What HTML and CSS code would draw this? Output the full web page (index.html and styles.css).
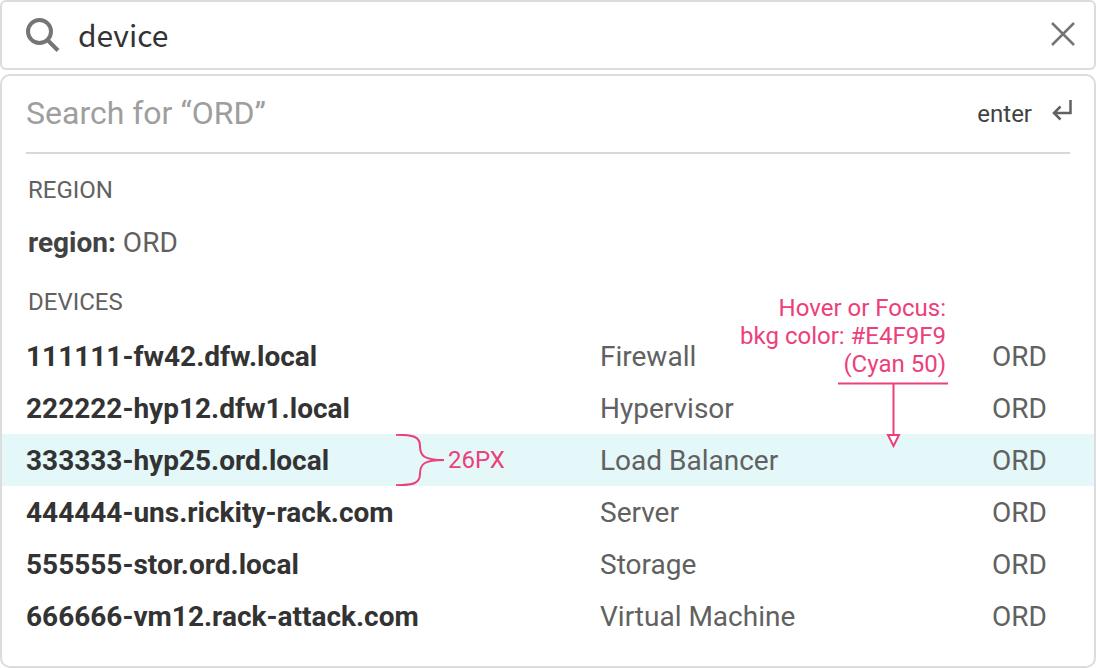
FILE: index.html
```html
<!DOCTYPE html>
<html lang="en">
<head>
<meta charset="utf-8">
<meta name="viewport" content="width=device-width, initial-scale=1">
<title>Search</title>
<link rel="stylesheet" href="styles.css">
</head>
<body>
<main class="search">
  <form class="search-bar" role="search">
    <label class="search-label" for="query" aria-label="Search">
      <svg class="icon-search" width="34" height="34" viewBox="0 0 34 34" aria-hidden="true"><circle cx="13.5" cy="13.5" r="11.5"/><path d="M21.5 22 32 32.500"/></svg>
    </label>
    <input class="search-input" id="query" type="text" value="device" autocomplete="off">
    <button class="icon-button" type="reset" aria-label="Clear search">
      <svg class="icon-close" width="24" height="24" viewBox="0 0 24 24" aria-hidden="true"><path d="M1 1 23 23M23 1 1 23"/></svg>
    </button>
  </form>

  <section class="results" aria-label="Suggestions">
    <button class="submit-row" type="button">
      <span class="submit-text">Search for “ORD”</span>
      <span class="submit-key">enter
        <svg class="icon-enter" width="20" height="22" viewBox="0 0 20 22" aria-hidden="true"><path d="M18.500 1V14H2M8.500 7.500 2 14l6.500 6.500"/></svg>
      </span>
    </button>

    <h2 class="group-title">Region</h2>
    <a class="region-link" href="#region"><strong>region:</strong> ORD</a>

    <h2 class="group-title">Devices</h2>
    <table class="devices">
      <colgroup><col><col class="col-type"><col class="col-region"></colgroup>
      <tbody>
        <tr><th scope="row"><a href="#d1">111111-fw42.dfw.local</a></th><td>Firewall</td><td>ORD</td></tr>
        <tr><th scope="row"><a href="#d2">222222-hyp12.dfw1.local</a></th><td>Hypervisor</td><td>ORD</td></tr>
        <tr class="is-active">
          <th scope="row"><a href="#d3">333333-hyp25.ord.local</a>
            <span class="note note-height">
              <svg width="48" height="52" viewBox="0 0 48 52" aria-hidden="true"><path d="M0 .75C18 .75 24 3 24 12C24 22 28 26 48 26C28 26 24 30 24 40C24 49 18 51.250 0 51.250"/></svg>
              26PX
            </span>
          </th>
          <td>Load Balancer
            <span class="note note-color">
              <span class="note-text">Hover or Focus:<br>bkg color: #E4F9F9<br>(Cyan 50)</span>
              <svg width="110" height="66" viewBox="0 0 110 66" aria-hidden="true"><path d="M0 1.500H110M55.500 1.500V53"/><path class="arrow-head" d="M50 53H61L55.500 64Z"/></svg>
            </span>
          </td>
          <td>ORD</td>
        </tr>
        <tr><th scope="row"><a href="#d4">444444-uns.rickity-rack.com</a></th><td>Server</td><td>ORD</td></tr>
        <tr><th scope="row"><a href="#d5">555555-stor.ord.local</a></th><td>Storage</td><td>ORD</td></tr>
        <tr><th scope="row"><a href="#d6">666666-vm12.rack-attack.com</a></th><td>Virtual Machine</td><td>ORD</td></tr>
      </tbody>
    </table>
  </section>
</main>
</body>
</html>
```
FILE: styles.css
```css
* {
  box-sizing: border-box;
}

body {
  margin: 0;
  background: #fff;
  color: #616161;
  font-family: Roboto, "Liberation Sans", sans-serif;
  font-size: 28px;
  line-height: 32px;
}

button,
input {
  margin: 0;
  padding: 0;
  border: 0;
  background: none;
  font: inherit;
}

button {
  cursor: pointer;
}

svg {
  display: block;
  fill: none;
}

a {
  color: inherit;
  text-decoration: none;
}

.search {
  display: flex;
  flex-direction: column;
  gap: 4px;
}

.search-bar {
  display: flex;
  align-items: center;
  gap: 18px;
  padding: 8px 18px 10px 24px;
  border: 2px solid #dcdcdc;
  border-radius: 6px;
}

.icon-search {
  margin-top: 2px;
  stroke: #757575;
  stroke-width: 4;
}

.search-input {
  flex: 1;
  min-width: 0;
  height: 48px;
  color: #333;
  font-family: "Noto Sans CJK SC", "Noto Sans", sans-serif;
  font-size: 30px;
  outline: none;
}

.icon-button {
  padding: 1px;
}

.icon-close {
  stroke: #757575;
  stroke-width: 2.5;
}

.results {
  padding-bottom: 24px;
  border: 2px solid #dcdcdc;
  border-radius: 10px;
}

.submit-row {
  display: flex;
  justify-content: space-between;
  align-items: center;
  width: calc(100% - 46px);
  height: 78px;
  margin: 0 22px 0 24px;
  padding-bottom: 2px;
  background: linear-gradient(#d8d8d8, #d8d8d8) left bottom / calc(100% - 2px) 2px no-repeat;
}

.submit-text {
  padding-bottom: 2px;
  color: #9e9e9e;
  font-size: 32px;
}

.submit-key {
  display: flex;
  align-items: center;
  gap: 20px;
  color: #424242;
  font-size: 24px;
}

.icon-enter {
  margin-bottom: 8px;
  stroke: #616161;
  stroke-width: 2.5;
}

.group-title {
  margin: 22px 26px;
  font-size: 24px;
  font-weight: 400;
  line-height: 28px;
  text-transform: uppercase;
}

.region-link {
  display: block;
  margin: 23px 26px 29px;
}

.region-link strong {
  color: #424242;
}

.devices {
  width: 100%;
  margin-top: -8px;
  border-collapse: collapse;
  table-layout: fixed;
}

.col-type {
  width: 392px;
}

.col-region {
  width: 102px;
}

.devices th,
.devices td {
  position: relative;
  height: 52px;
  padding: 2px 0 0;
  text-align: left;
  white-space: nowrap;
}

.devices th {
  padding-left: 24px;
  color: #333;
  font-weight: 700;
}

.devices tr:hover,
.is-active {
  background: #e4f7f9;
}

.note {
  position: absolute;
  color: #ec407a;
  font-size: 24px;
  font-weight: 400;
  line-height: 28px;
}

.note svg {
  stroke: #ec407a;
  stroke-width: 2;
}

.note-height {
  top: 0;
  left: 394px;
  display: flex;
  align-items: center;
  gap: 4px;
}

.note-color {
  right: 44px;
  bottom: 38px;
  display: flex;
  flex-direction: column;
  align-items: flex-end;
  gap: 4px;
  text-align: right;
}

.note-text {
  padding-right: 2px;
}

.note .arrow-head {
  fill: #fff;
}
```
